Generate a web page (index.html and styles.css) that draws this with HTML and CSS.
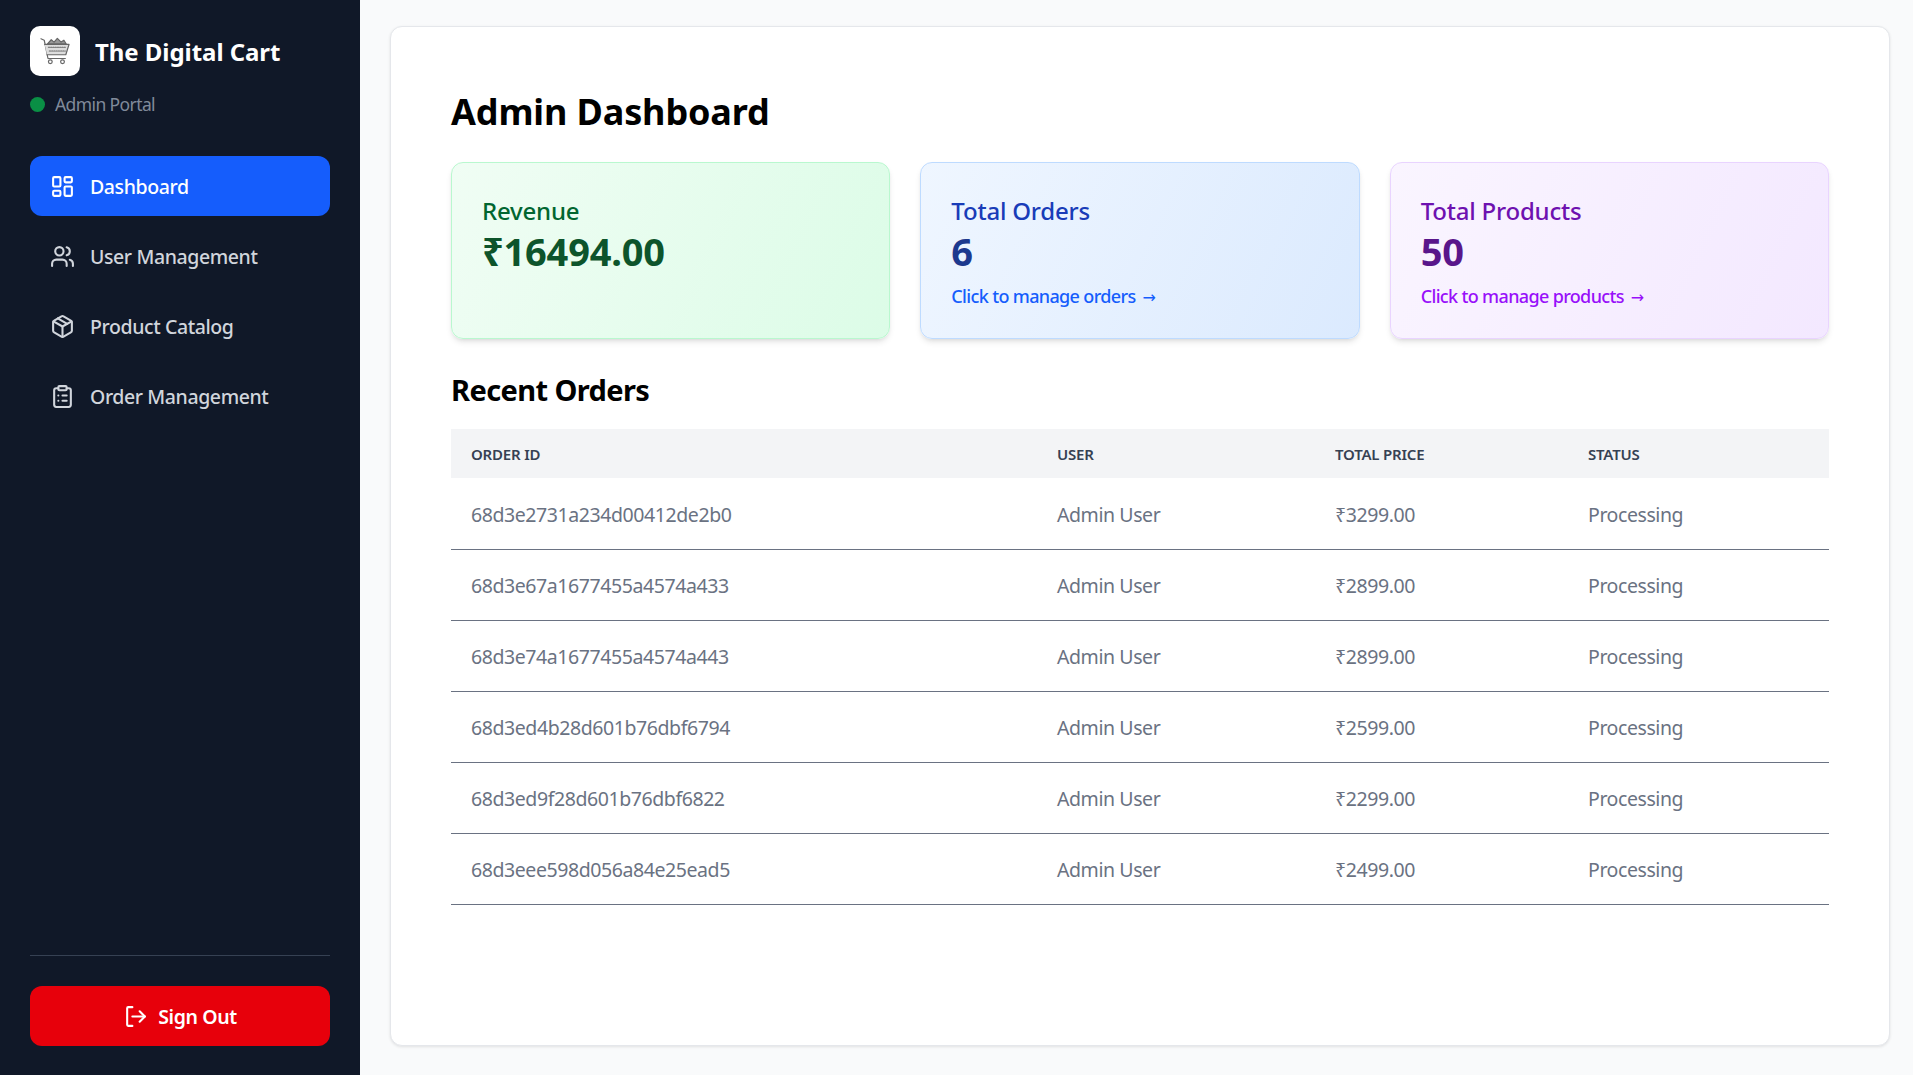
FILE: index.html
```html
<!DOCTYPE html>
<html lang="en">
  <head>
    <title>The Digital Cart - Admin Dashboard</title>
    <link rel="stylesheet" href="styles.css">
  </head>
  <body>
    <aside class="sidebar">
      <div class="brand">
        <div class="brand-logo">
          <svg viewBox="0 0 32 32" width="30" height="30" fill="none" stroke="#666" stroke-width="1.3" stroke-linecap="round" stroke-linejoin="round">
            <path d="M1 3 L4.5 4.5 L8.5 24 H27"/>
            <path d="M5 9 H31 L27.5 20 H7.5" fill="#ddd"/>
            <path d="M8 8.5 L12 4 L15 6.5 L18.5 2.5 L22.5 6.5 L25.5 4.5 L28 8.5 Z" fill="#999"/>
            <path d="M9 12 H28 M10 16 H27" stroke-dasharray="1.2 1.2"/>
            <circle cx="11" cy="27.5" r="2"/>
            <circle cx="24" cy="27.5" r="2"/>
          </svg>
        </div>
        <span class="brand-name">The Digital Cart</span>
      </div>
      <div class="portal"><span class="dot"></span>Admin Portal</div>

      <nav class="nav">
        <a class="nav-item active">
          <svg class="icon" viewBox="0 0 24 24"><rect x="3" y="3" width="7" height="9" rx="1"/><rect x="14" y="3" width="7" height="5" rx="1"/><rect x="14" y="12" width="7" height="9" rx="1"/><rect x="3" y="16" width="7" height="5" rx="1"/></svg>
          Dashboard
        </a>
        <a class="nav-item">
          <svg class="icon" viewBox="0 0 24 24"><path d="M16 21v-2a4 4 0 0 0-4-4H6a4 4 0 0 0-4 4v2"/><circle cx="9" cy="7" r="4"/><path d="M22 21v-2a4 4 0 0 0-3-3.87"/><path d="M16 3.13a4 4 0 0 1 0 7.75"/></svg>
          User Management
        </a>
        <a class="nav-item">
          <svg class="icon" viewBox="0 0 24 24"><path d="M21 8a2 2 0 0 0-1-1.73l-7-4a2 2 0 0 0-2 0l-7 4A2 2 0 0 0 3 8v8a2 2 0 0 0 1 1.73l7 4a2 2 0 0 0 2 0l7-4A2 2 0 0 0 21 16Z"/><path d="m3.3 7 8.7 5 8.7-5"/><path d="M12 22V12"/><path d="m7.5 4.27 9 5.15"/></svg>
          Product Catalog
        </a>
        <a class="nav-item">
          <svg class="icon" viewBox="0 0 24 24"><rect x="8" y="2" width="8" height="4" rx="1"/><path d="M16 4h2a2 2 0 0 1 2 2v14a2 2 0 0 1-2 2H6a2 2 0 0 1-2-2V6a2 2 0 0 1 2-2h2"/><path d="M12 11h4"/><path d="M12 16h4"/><path d="M8 11h.01"/><path d="M8 16h.01"/></svg>
          Order Management
        </a>
      </nav>

      <div class="sidebar-foot">
        <button class="signout">
          <svg class="icon" viewBox="0 0 24 24"><path d="M9 21H5a1 1 0 0 1-1-1V4a1 1 0 0 1 1-1h4"/><path d="m16 17 5-5-5-5"/><path d="M21 12H9"/></svg>
          Sign Out
        </button>
      </div>
    </aside>

    <main class="content">
      <div class="panel">
        <h1>Admin Dashboard</h1>

        <div class="stats">
          <div class="stat green">
            <div class="stat-title">Revenue</div>
            <div class="stat-value">₹16494.00</div>
          </div>
          <div class="stat blue">
            <div class="stat-title">Total Orders</div>
            <div class="stat-value">6</div>
            <a class="stat-link">Click to manage orders <span class="arrow">→</span></a>
          </div>
          <div class="stat purple">
            <div class="stat-title">Total Products</div>
            <div class="stat-value">50</div>
            <a class="stat-link">Click to manage products <span class="arrow">→</span></a>
          </div>
        </div>

        <h2>Recent Orders</h2>

        <table class="orders">
          <thead>
            <tr>
              <th class="col-id">Order ID</th>
              <th class="col-user">User</th>
              <th class="col-price">Total Price</th>
              <th>Status</th>
            </tr>
          </thead>
          <tbody>
            <tr><td>68d3e2731a234d00412de2b0</td><td>Admin User</td><td>₹3299.00</td><td>Processing</td></tr>
            <tr><td>68d3e67a1677455a4574a433</td><td>Admin User</td><td>₹2899.00</td><td>Processing</td></tr>
            <tr><td>68d3e74a1677455a4574a443</td><td>Admin User</td><td>₹2899.00</td><td>Processing</td></tr>
            <tr><td>68d3ed4b28d601b76dbf6794</td><td>Admin User</td><td>₹2599.00</td><td>Processing</td></tr>
            <tr><td>68d3ed9f28d601b76dbf6822</td><td>Admin User</td><td>₹2299.00</td><td>Processing</td></tr>
            <tr><td>68d3eee598d056a84e25ead5</td><td>Admin User</td><td>₹2499.00</td><td>Processing</td></tr>
          </tbody>
        </table>
      </div>
    </main>
  </body>
</html>
```

FILE: styles.css
```css
* {
  box-sizing: border-box;
}

html, body {
  height: 100%;
}

body {
  margin: 0;
  display: flex;
  background-color: #f9fafb;
  font-family: "Noto Sans", sans-serif;
  overflow: hidden;
}

/* sidebar */

.sidebar {
  width: 360px;
  height: 1075px;
  flex-shrink: 0;
  display: flex;
  flex-direction: column;
  padding: 26px 30px 29px;
  background-color: #101828;
}

.brand {
  display: flex;
  align-items: center;
  gap: 15px;
}

.brand-logo {
  width: 50px;
  height: 50px;
  display: flex;
  align-items: center;
  justify-content: center;
  background-color: white;
  border-radius: 10px;
}

.brand-name {
  padding-top: 1px;
  color: white;
  font-size: 24px;
  font-weight: 700;
  letter-spacing: -0.05px;
}

.portal {
  display: flex;
  align-items: center;
  gap: 10px;
  margin-top: 16px;
  color: #808a9a;
  font-size: 17.5px;
  letter-spacing: -0.6px;
  line-height: 24px;
}

.dot {
  width: 15px;
  height: 15px;
  border-radius: 50%;
  background-color: #0a8f45;
}

.nav {
  display: flex;
  flex-direction: column;
  gap: 10px;
  margin-top: 40px;
}

.nav-item {
  height: 60px;
  display: flex;
  align-items: center;
  gap: 15px;
  padding: 0 20px;
  border-radius: 12px;
  color: #d1d5dc;
  font-size: 19.5px;
  font-weight: 500;
  letter-spacing: -0.4px;
}

.nav-item.active {
  background-color: #155dfc;
  color: white;
}

.icon {
  width: 25px;
  height: 25px;
  flex-shrink: 0;
  fill: none;
  stroke: currentColor;
  stroke-width: 2;
  stroke-linecap: round;
  stroke-linejoin: round;
}

.sidebar-foot {
  margin-top: auto;
  padding-top: 30px;
  border-top: 1px solid #364153;
}

.signout {
  width: 100%;
  height: 60px;
  display: flex;
  align-items: center;
  justify-content: center;
  gap: 10px;
  border: none;
  border-radius: 12px;
  background-color: #e7000b;
  color: white;
  font-family: inherit;
  font-size: 19.5px;
  font-weight: 600;
  letter-spacing: -0.4px;
}

/* main panel */

.content {
  flex: 1;
  padding: 26px 23px 30px 30px;
}

.panel {
  height: 1020px;
  padding: 60px;
  background-color: white;
  border: 1px solid #e5e7eb;
  border-radius: 12px;
  box-shadow: 0 1px 3px rgba(0, 0, 0, 0.1);
}

h1 {
  margin: 0;
  color: black;
  font-size: 36px;
  line-height: 50px;
  font-weight: 700;
  letter-spacing: -0.13px;
}

.stats {
  display: grid;
  grid-template-columns: repeat(3, 1fr);
  gap: 30px;
  margin-top: 25px;
}

.stat {
  height: 177px;
  padding: 32px 30px 30px;
  border: 1px solid;
  border-radius: 12px;
  box-shadow: 0 4px 6px -1px rgba(0, 0, 0, 0.1), 0 2px 4px -2px rgba(0, 0, 0, 0.1);
}

.stat-title {
  font-size: 24px;
  line-height: 32px;
  font-weight: 500;
  letter-spacing: -0.2px;
}

.stat-value {
  font-size: 38px;
  line-height: 48px;
  font-weight: 700;
  letter-spacing: -0.2px;
}

.stat-link {
  display: block;
  margin-top: 8px;
  font-size: 18px;
  font-weight: 500;
  line-height: 26px;
  letter-spacing: -0.65px;
}

.arrow {
  margin-left: 3px;
  font-family: "DejaVu Sans", sans-serif;
  font-size: 16px;
  font-weight: 400;
}

.green {
  background: linear-gradient(115deg, #f0fdf4, #dcfce7);
  border-color: #b9f8cf;
}
.green .stat-title { color: #016630; }
.green .stat-value { color: #0d542b; }

.blue {
  background: linear-gradient(115deg, #eff6ff, #dbeafe);
  border-color: #bedbff;
}
.blue .stat-title { color: #193cb8; }
.blue .stat-value { color: #1c398e; }
.blue .stat-link { color: #155dfc; }

.purple {
  background: linear-gradient(115deg, #faf5ff, #f3e8ff);
  border-color: #e9d4ff;
}
.purple .stat-title { color: #6e11b0; }
.purple .stat-value { color: #59168b; }
.purple .stat-link { color: #9810fa; }

h2 {
  margin: 31px 0 0;
  color: black;
  font-size: 29px;
  line-height: 40px;
  font-weight: 700;
  letter-spacing: -0.6px;
}

.orders {
  width: 100%;
  margin-top: 19px;
  border-collapse: collapse;
  table-layout: fixed;
}

.orders th {
  height: 49px;
  padding: 0 20px;
  background-color: #f3f4f6;
  color: #364153;
  font-size: 15px;
  font-weight: 600;
  text-align: left;
  text-transform: uppercase;
  letter-spacing: -0.2px;
}

.col-id { width: 586px; }
.col-user { width: 278px; }
.col-price { width: 253px; }

.orders td {
  height: 71px;
  padding: 2px 20px 0;
  border-bottom: 1px solid #6a7282;
  color: #6a7282;
  font-size: 19.5px;
  letter-spacing: -0.42px;
}
```
